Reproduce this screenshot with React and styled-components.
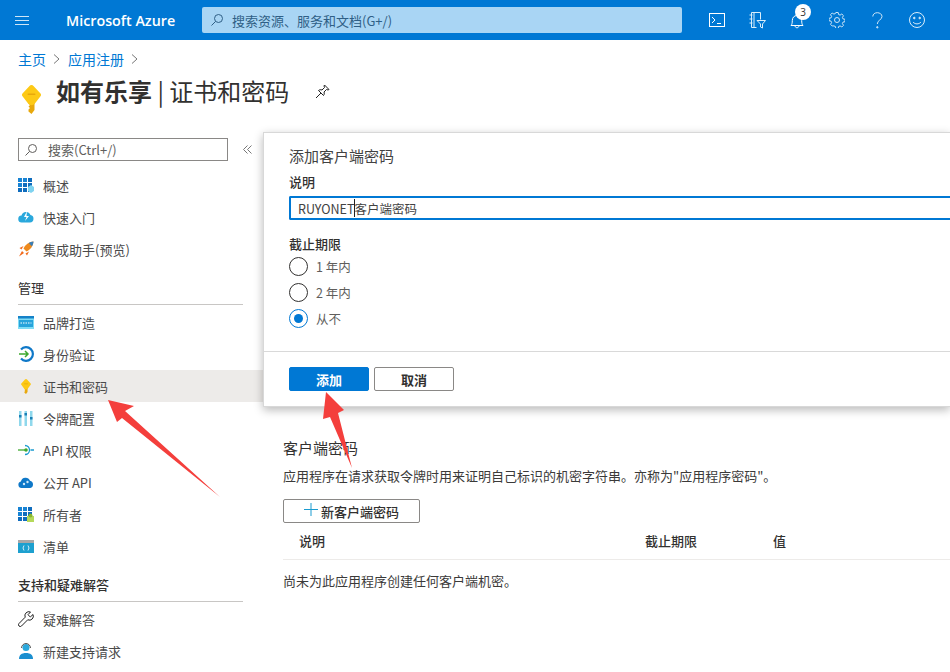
import React from 'react'
import styled, { createGlobalStyle } from 'styled-components'

const Global = createGlobalStyle`
html, body { margin: 0; padding: 0; background: #fff; }
body { font-family: "Noto Sans CJK SC", "Liberation Sans", sans-serif; color: #323130; overflow: hidden; }
* { box-sizing: border-box; }
`
const latin = `"Open Sans", "Noto Sans CJK SC", sans-serif`

const Page = styled.div`
position: relative;
width: 950px;
height: 672px;
overflow: hidden;
`
const Header = styled.header`
display: flex;
align-items: center;
height: 40px;
background: #0078d4;
`
const Burger = styled.div`
display: flex;
flex-direction: column;
gap: 3px;
width: 14px;
margin-left: 15px;
span { display: block; height: 1px; background: #cfe6f7; }
`
const Brand = styled.div`
margin-left: 37px;
width: 136px;
color: #fff;
font-family: ${latin};
font-size: 14.3px;
font-weight: 600;
`
const TopSearch = styled.div`
display: flex;
align-items: center;
gap: 8px;
width: 480px;
height: 26px;
padding-left: 8px;
background: #a9d5f4;
border-radius: 2px;
color: #2f5f86;
font-size: 13px;
`
const TopIcons = styled.div`
display: flex;
margin-left: 15px;
`
const TopIcon = styled.div`
position: relative;
display: flex;
align-items: center;
justify-content: center;
width: 40px;
height: 40px;
color: #fff;
`
const Badge = styled.span`
position: absolute;
top: 4px;
left: 18px;
display: flex;
align-items: center;
justify-content: center;
width: 16px;
height: 16px;
border-radius: 50%;
background: #fff;
color: #333;
font-family: ${latin};
font-size: 10px;
`
const Crumbs = styled.nav`
display: flex;
align-items: center;
gap: 7px;
margin: 10px 0 0 18px;
height: 17px;
font-size: 14px;
color: #0078d4;
svg { color: #777; }
`
const TitleRow = styled.div`
display: flex;
align-items: flex-start;
height: 36px;
margin: 6px 0 0 22px;
`
const KeyWrap = styled.span`
display: flex;
margin-top: 12px;
`
const Title = styled.h1`
margin: 0 0 0 15px;
font-size: 24px;
font-weight: 400;
line-height: 36px;
color: #323130;
b { font-weight: 700; }
`
const PinIcon = styled.span`
display: flex;
margin: 11px 0 0 26px;
`
const Body = styled.div`
display: flex;
margin-top: 29px;
`
const Side = styled.aside`
width: 263px;
flex: none;
`
const SideSearchRow = styled.div`
display: flex;
align-items: center;
padding-left: 18px;
margin-bottom: 8px;
height: 23px;
`
const SideSearch = styled.div`
display: flex;
align-items: center;
gap: 10px;
width: 210px;
height: 23px;
padding-left: 5px;
border: 1px solid #8a8886;
color: #605e5c;
font-size: 13px;
`
const Collapse = styled.span`
display: flex;
margin-left: 15px;
`
const Item = styled.div`
display: flex;
align-items: center;
gap: 9px;
height: 32px;
padding-left: 18px;
font-size: 13px;
color: #4a4a4a;
background: ${p => (p.$active ? '#edebe9' : 'transparent')};
> svg { flex: none; }
`
const Section = styled.div`
height: 27px;
margin: 13px 20px 1px 18px;
font-size: 13px;
line-height: 20px;
font-weight: ${p => (p.$bold ? 500 : 400)};
color: #323130;
border-bottom: 1px solid #c8c6c4;
`
const Main = styled.main`
flex: 1;
padding: 300px 0 0 20px;
`
const H2 = styled.h2`
margin: 0;
font-size: 15px;
line-height: 20px;
font-weight: 400;
color: #323130;
`
const Desc = styled.p`
margin: 8px 0 0;
font-size: 13px;
line-height: 20px;
color: #3b3a39;
white-space: nowrap;
`
const NewBtn = styled.div`
display: flex;
align-items: center;
justify-content: center;
gap: 3px;
width: 137px;
height: 24px;
margin-top: 13px;
border: 1px solid #8a8886;
border-radius: 2px;
font-size: 13px;
font-weight: 500;
svg { margin-bottom: 3px; }
`
const Row = styled.div`
display: grid;
grid-template-columns: 346px 128px 1fr;
align-items: center;
height: 36px;
margin-top: 1px;
padding: 0 0 2px 16px;
border-bottom: 1px solid #edebe9;
font-size: 13px;
font-weight: 500;
`
const Empty = styled.p`
margin: 11px 0 0;
font-size: 13px;
line-height: 20px;
color: #3b3a39;
`
const Dialog = styled.section`
position: absolute;
left: 263px;
top: 132px;
width: 687px;
height: 275px;
background: #fff;
border: 1px solid #d8d8d8;
border-right: 0;
box-shadow: 0 3px 9px rgba(0, 0, 0, 0.28);
`
const DialogBody = styled.div`
height: 219px;
padding: 13px 0 0 25px;
border-bottom: 1px solid #d9d9d9;
`
const DialogTitle = styled.div`
font-size: 15px;
line-height: 20px;
color: #424242;
`
const Label = styled.div`
margin-top: ${p => p.$top}px;
font-size: 13px;
line-height: 20px;
font-weight: 500;
color: #323130;
`
const Input = styled.div`
display: flex;
align-items: center;
height: 24px;
margin-top: 4px;
padding-left: 7px;
border: 2px solid #0078d4;
border-right: 0;
border-radius: 2px 0 0 2px;
font-size: 12.5px;
color: #424242;
i { width: 1px; height: 18px; background: #222; margin: 0 -1px 0 0; }
`
const Radio = styled.div`
display: flex;
align-items: center;
gap: 8px;
height: 26px;
font-size: 12.5px;
color: #605e5c;
`
const Circle = styled.span`
display: flex;
align-items: center;
justify-content: center;
width: 19px;
height: 19px;
border-radius: 50%;
border: 1px solid ${p => (p.$on ? '#0078d4' : '#323130')};
&::after {
  content: "";
  display: ${p => (p.$on ? 'block' : 'none')};
  width: 9px;
  height: 9px;
  border-radius: 50%;
  background: #0078d4;
}
`
const Radios = styled.div`
margin-top: -1px;
`
const Footer = styled.div`
display: flex;
gap: 5px;
padding: 15px 0 0 25px;
`
const Btn = styled.div`
display: flex;
align-items: center;
justify-content: center;
width: 80px;
height: 24px;
border-radius: 2px;
font-size: 13px;
font-weight: 700;
color: ${p => (p.$primary ? '#fff' : '#323130')};
background: ${p => (p.$primary ? '#0078d4' : '#fff')};
border: 1px solid ${p => (p.$primary ? '#0078d4' : '#8a8886')};
`
const Arrow = styled.svg`
position: absolute;
left: 0;
top: 0;
pointer-events: none;
`

const Search = ({ c = 'currentColor' }) => (
  <svg width="14" height="14" viewBox="0 0 14 14" fill="none" stroke={c}>
    <circle cx="8.5" cy="5.5" r="4" />
    <path d="M5.5 8.5 1.5 12.5" />
  </svg>
)
const Chevron = () => (
  <svg width="8" height="12" viewBox="0 0 8 12" fill="none" stroke="currentColor"><path d="M1 1.500 6 6 1 10.500" /></svg>
)
const KeyIcon = ({ w = 19, h = 29 }) => (
  <svg width={w} height={h} viewBox="0 0 19 29">
    <path d="M6 15h7v1l-.5 1v8l-3 4-3-2.500v-2l1.500-1.500-1.500-1.500 1.500-1.500-1.500-1.500z" fill="#e8a80c" />
    <path d="M9.500 0c.9 0 1.500.4 2 1l7 7.500c.7.8.7 2 0 2.800l-6 7.800c-1.500 1.400-4.500 1.400-6 0l-6-7.800c-.7-.8-.7-2 0-2.800l7-7.500c.5-.6 1.100-1 2-1z" fill="#fdc916" />
    <rect x="5.500" y="8.500" width="8" height="1.600" rx=".8" fill="#e8a80c" />
  </svg>
)

const Grid = ({ badge }) => (
  <svg width="16" height="15" viewBox="0 0 16 15">
    {[0, 5, 10].map(x => [0, 5, 10].map(y => (
      <rect key={`${x}${y}`} x={x} y={y} width="4" height="4" fill={x + y > 5 ? '#0f6cbd' : '#1783d4'} />
    )))}
    {badge === 'cube' && <path d="M10 9l3-2 3 2v4l-3 2-3-2z" fill="#7fd3f0" />}
    {badge === 'user' && <g><rect x="9" y="9" width="7" height="6" fill="#b5d95a" /><circle cx="12.500" cy="8.500" r="2" fill="#86b52e" /></g>}
  </svg>
)
const Icons = {
  overview: <Grid badge="cube" />,
  quick: (
    <svg width="16" height="14" viewBox="0 0 16 14">
      <path d="M4 12.500a3.500 3.500 0 0 1-.5-7A4.800 4.800 0 0 1 12.500 5a3.800 3.800 0 0 1-.5 7.500z" fill="#2aa8dc" />
      <path d="M9 1 6 7h2.500L7 11l4-5H8.500z" fill="#fff" />
    </svg>
  ),
  rocket: (
    <svg width="16" height="16" viewBox="0 0 16 16">
      <path d="M15.500.5c-5 .5-8 3-10 7l3 3c4-2 6.500-5 7-10z" fill="#ee8a1d" />
      <path d="M15.500.5c-2 .2-3.500.8-4.800 1.600l3.200 3.200C14.700 4 15.300 2.500 15.500.5z" fill="#3a7fb8" />
      <path d="M5.500 5 1.500 7l2 1.500zM11 10.500 9 14.500 7.500 12.500zM4 10l2 2-5 3.500z" fill="#f26a1b" />
    </svg>
  ),
  brand: (
    <svg width="16" height="13" viewBox="0 0 16 13">
      <rect width="16" height="13" fill="#7fdcf5" />
      <rect width="16" height="2.500" y="0" fill="#1582c8" />
      <rect x="1" y="4" width="14" height="7" fill="#27a3db" />
      <path d="M2.500 7h11" stroke="#fff" strokeDasharray="1.500 1" />
    </svg>
  ),
  auth: (
    <svg width="16" height="16" viewBox="0 0 16 16" fill="none">
      <path d="M3 3.500A6.800 6.800 0 1 1 3 12.500" stroke="#0f78c8" strokeWidth="2.200" />
      <path d="M1 8h9M7 5l3 3-3 3" stroke="#3fa92f" strokeWidth="1.500" />
    </svg>
  ),
  key: <KeyIcon w={10} h={15} />,
  token: (
    <svg width="14" height="15" viewBox="0 0 14 15">
      {[0, 5.500, 11].map((x, i) => (
        <g key={x}>
          <rect x={x} y="0" width="2.500" height="15" fill="#8fd8ec" />
          <rect x={x} y={[4, 2, 6][i]} width="2.500" height="2.500" fill="#1b7fb5" />
        </g>
      ))}
    </svg>
  ),
  api: (
    <svg width="16" height="12" viewBox="0 0 16 12" fill="none">
      <path d="M0 6h9" stroke="#3fa92f" strokeWidth="1.300" />
      <circle cx="8" cy="6" r="1.800" fill="#3fa92f" />
      <path d="M7 1.500a4.500 4.500 0 0 1 0 9M12.500 6H16" stroke="#1a9bd0" strokeWidth="1.300" />
    </svg>
  ),
  expose: (
    <svg width="16" height="12" viewBox="0 0 16 12">
      <path d="M3.500 12a3.300 3.300 0 0 1-.6-6.500A4.800 4.800 0 0 1 12 4.800 3.700 3.700 0 0 1 12.300 12z" fill="#0f78c8" />
      <circle cx="6" cy="8" r="1.200" fill="#cfeafa" />
      <circle cx="9.500" cy="6" r="1.200" fill="#cfeafa" />
    </svg>
  ),
  owners: <Grid badge="user" />,
  manifest: (
    <svg width="16" height="13" viewBox="0 0 16 13">
      <rect width="16" height="13" fill="#1da0cf" />
      <rect width="16" height="3" fill="#a8a8a8" />
      <path d="M6 5.500 5 8l1 2.500M10 5.500 11 8l-1 2.500" fill="none" stroke="#fff" strokeWidth=".8" />
    </svg>
  ),
  wrench: (
    <svg width="16" height="16" viewBox="0 0 16 16" fill="none" stroke="#222">
      <path d="M15 3.500 12.300 6 10 3.700 12.500 1a4 4 0 0 0-5.300 5.200L1 12.500a1.700 1.700 0 0 0 2.500 2.500l6.200-6.200A4 4 0 0 0 15 3.500z" />
    </svg>
  ),
  support: (
    <svg width="14" height="16" viewBox="0 0 14 16">
      <circle cx="7" cy="4.500" r="3.500" fill="#2aa8dc" />
      <path d="M0 16c0-4 2.500-6 7-6s7 2 7 6z" fill="#1b8fd0" />
      <path d="M2.500 5a4.500 4.500 0 0 1 9 0" fill="none" stroke="#555" />
    </svg>
  ),
}

const top = [['overview', '概述'], ['quick', '快速入门'], ['rocket', '集成助手(预览)']]
const manage = [['brand', '品牌打造'], ['auth', '身份验证'], ['key', '证书和密码', true], ['token', '令牌配置'], ['api', 'API 权限'], ['expose', '公开 API'], ['owners', '所有者'], ['manifest', '清单']]
const support = [['wrench', '疑难解答'], ['support', '新建支持请求']]

const NavIcon = styled.span`
display: flex;
justify-content: center;
align-items: center;
width: 16px;
flex: none;
`
const NavList = ({ items }) => items.map(([icon, label, active]) => (
  <Item key={label} $active={active}>
    <NavIcon>{Icons[icon]}</NavIcon>
    {label}
  </Item>
))

export default function App() {
  return (
    <Page>
      <Global />
      <Header>
        <Burger><span /><span /><span /></Burger>
        <Brand>Microsoft Azure</Brand>
        <TopSearch><Search />搜索资源、服务和文档(G+/)</TopSearch>
        <TopIcons>
          <TopIcon>
            <svg width="16" height="14" viewBox="0 0 16 14" fill="none" stroke="#fff"><rect x=".5" y=".5" width="15" height="13" /><path d="M3 4l3 3-3 3M8 10.500h4" /></svg>
          </TopIcon>
          <TopIcon>
            <svg width="17" height="18" viewBox="0 0 17 18" fill="none" stroke="#dbeefa"><path d="M2.500 1.500h9v7M2.500 1.500v15h5M5 1.500v15M.5 4h3M.5 8h3M.5 12h3" /><path d="M8 9.500h8.500l-3 3.500v4l-2-1v-3z" /></svg>
          </TopIcon>
          <TopIcon>
            <svg width="14" height="17" viewBox="0 0 14 17" fill="none" stroke="#fff"><path d="M1 13.500c1-1 1.300-2.500 1.300-5 0-3 2-5 4.700-5s4.700 2 4.700 5c0 2.500.3 4 1.300 5zM5 13.500c0 3 4 3 4 0" /></svg>
            <Badge>3</Badge>
          </TopIcon>
          <TopIcon>
            <svg width="16" height="16" viewBox="0 0 16 16" fill="none" stroke="#cfe6f7"><circle cx="8" cy="8" r="2.500" /><path d="M6.800.5h2.400l.4 2 1.500.6 1.700-1.100 1.700 1.700-1.100 1.700.6 1.500 2 .4v2.400l-2 .4-.6 1.500 1.100 1.700-1.700 1.700-1.700-1.100-1.500.6-.4 2H6.800l-.4-2-1.500-.6L3.200 14 1.500 12.300l1.100-1.700-.6-1.500-2-.4V6.300l2-.4.6-1.500-1.100-1.700L3.200 1l1.700 1.100 1.500-.6z" /></svg>
          </TopIcon>
          <TopIcon>
            <svg width="11" height="17" viewBox="0 0 11 17" fill="none" stroke="#cfe6f7"><path d="M.8 4.500C.8 2.200 2.800.7 5.300.7s4.700 1.500 4.700 3.800c0 3.500-4.700 3.500-4.700 7.500" /><circle cx="5.300" cy="15.300" r=".7" fill="#cfe6f7" /></svg>
          </TopIcon>
          <TopIcon>
            <svg width="16" height="16" viewBox="0 0 16 16" fill="none" stroke="#dbeefa"><circle cx="8" cy="8" r="7.500" /><circle cx="5.300" cy="6" r=".8" fill="#dbeefa" /><circle cx="10.700" cy="6" r=".8" fill="#dbeefa" /><path d="M4 10c2 2.500 6 2.500 8 0" /></svg>
          </TopIcon>
        </TopIcons>
      </Header>
      <Crumbs>主页<Chevron />应用注册<Chevron /></Crumbs>
      <TitleRow>
        <KeyWrap><KeyIcon /></KeyWrap>
        <Title><b>如有乐享</b> | 证书和密码</Title>
        <PinIcon>
          <svg width="15" height="15" viewBox="0 0 15 15" fill="none" stroke="#222"><path d="M9.500 1 14 5.500l-1 .5-1.500-.5L9 8c.5 1.500.3 2.500-.5 3.500L3.500 6.500C4.500 5.700 5.500 5.500 7 6l2.500-2.500L9 2zM6 9l-5 5" /></svg>
        </PinIcon>
      </TitleRow>
      <Body>
        <Side>
          <SideSearchRow>
            <SideSearch><Search c="#605e5c" />搜索(Ctrl+/)</SideSearch>
            <Collapse>
              <svg width="9" height="9" viewBox="0 0 9 9" fill="none" stroke="#777"><path d="M4.500.5.500 4.500l4 4M8.500.5l-4 4 4 4" /></svg>
            </Collapse>
          </SideSearchRow>
          <NavList items={top} />
          <Section>管理</Section>
          <NavList items={manage} />
          <Section $bold>支持和疑难解答</Section>
          <NavList items={support} />
        </Side>
        <Main>
          <H2>客户端密码</H2>
          <Desc>应用程序在请求获取令牌时用来证明自己标识的机密字符串。亦称为"应用程序密码"。</Desc>
          <NewBtn>
            <svg width="14" height="13" viewBox="0 0 14 13" stroke="#1a9bd0"><path d="M7 0v13M0 6.500h14" /></svg>
            新客户端密码
          </NewBtn>
          <Row><span>说明</span><span>截止期限</span><span>值</span></Row>
          <Empty>尚未为此应用程序创建任何客户端机密。</Empty>
        </Main>
      </Body>
      <Dialog>
        <DialogBody>
          <DialogTitle>添加客户端密码</DialogTitle>
          <Label $top={6}>说明</Label>
          <Input>RUYONET<i />客户端密码</Input>
          <Label $top={14}>截止期限</Label>
          <Radios>
            <Radio><Circle />1 年内</Radio>
            <Radio><Circle />2 年内</Radio>
            <Radio><Circle $on />从不</Radio>
          </Radios>
        </DialogBody>
        <Footer>
          <Btn $primary>添加</Btn>
          <Btn>取消</Btn>
        </Footer>
      </Dialog>
      <Arrow width="950" height="672" viewBox="0 0 950 672">
        <path d="M108 400 134 406 125 411 220 497 122 418 117 422z" fill="#f43f3c" />
        <path d="M326 392 344 410 338 413 352 468 330 417 323 419z" fill="#f43f3c" />
      </Arrow>
    </Page>
  )
}
